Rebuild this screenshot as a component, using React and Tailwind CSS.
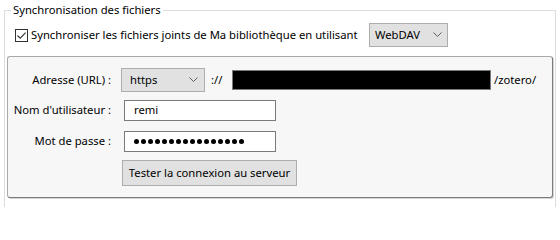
const FONT = { fontFamily: '"Segoe UI", "Noto Sans", "Liberation Sans", sans-serif' };

function Chevron() {
  return (
    <svg width="9" height="6" viewBox="0 0 9 6" className="shrink-0">
      <path d="M0.5 0.5 L4.5 4.5 L8.5 0.5" fill="none" stroke="#5f5f5f" strokeWidth="1" />
    </svg>
  );
}

function Select({ value, className }) {
  return (
    <div
      className={`flex items-center justify-between h-[24px] border border-[#adadad] bg-[#e1e1e1] text-black ${className}`}
    >
      <span>{value}</span>
      <Chevron />
    </div>
  );
}

function Row({ label, children, className = "" }) {
  return (
    <div className={`flex items-center ${className}`}>
      <div className="w-[104px] text-right shrink-0 pr-[1px] whitespace-nowrap">{label}</div>
      {children}
    </div>
  );
}

export default function App() {
  return (
    <div
      className="w-[560px] h-[207px] bg-white overflow-hidden text-[11.25px] text-black whitespace-nowrap"
      style={FONT}
    >
      <fieldset className="ml-[4px] mr-[4px] border border-[#dcdcdc] h-[280px]">
        <legend className="ml-[6px] px-[2px] leading-[20px]">Synchronisation des fichiers</legend>

        {/* checkbox + protocol */}
        <div className="flex items-center h-[24px] mt-[3px]">
          <div className="ml-[10px] w-[13px] h-[13px] border border-[#333333] bg-white flex items-center justify-center shrink-0">
            <svg width="11" height="11" viewBox="0 0 11 11">
              <path d="M1.5 5.5 L4.2 8.2 L9.6 2.6" fill="none" stroke="#333333" strokeWidth="1.1" />
            </svg>
          </div>
          <span className="ml-[3px]">Synchroniser les fichiers joints de Ma bibliothèque en utilisant</span>
          <Select value="WebDAV" className="w-[79px] ml-auto mr-[107px] pl-[5px] pr-[5px]" />
        </div>

        {/* server settings */}
        <div className="mt-[9px] mx-[2px] rounded-[3px] border border-[#a9a9a9] border-r-[#7c7c7c] border-b-[#7c7c7c] bg-[#f7f7f7] pt-[11px] pb-[11px] shadow-[1px_1px_0_#d6d6d6]">
          <Row label="Adresse (URL) :" className="h-[24px]">
            <Select value="https" className="w-[84px] ml-[9px] pl-[8px] pr-[6px]" />
            <span className="ml-[6px] w-[21px]">://</span>
            <div className="w-[259px] h-[20px] border border-[#7a7a7a] bg-black" />
            <span className="ml-[3px]">/zotero/</span>
          </Row>

          <Row label="Nom d'utilisateur :" className="h-[21px] mt-[8px]">
            <div className="ml-[12px] w-[152px] h-[21px] border border-[#7a7a7a] bg-white flex items-center pl-[9px]">
              remi
            </div>
          </Row>

          <Row label="Mot de passe :" className="h-[21px] mt-[10px]">
            <div className="ml-[12px] w-[152px] h-[21px] border border-[#7a7a7a] bg-white flex items-center pl-[9px] gap-[2px]">
              {Array.from({ length: 16 }).map((_, i) => (
                <span key={i} className="w-[5px] h-[5px] rounded-full bg-black shrink-0" />
              ))}
            </div>
          </Row>

          <div className="flex mt-[8px]">
            <button
              type="button"
              className="ml-[114px] w-[175px] h-[26px] border border-[#adadad] bg-[#e1e1e1] text-black"
            >
              Tester la connexion au serveur
            </button>
          </div>
        </div>
      </fieldset>
    </div>
  );
}
